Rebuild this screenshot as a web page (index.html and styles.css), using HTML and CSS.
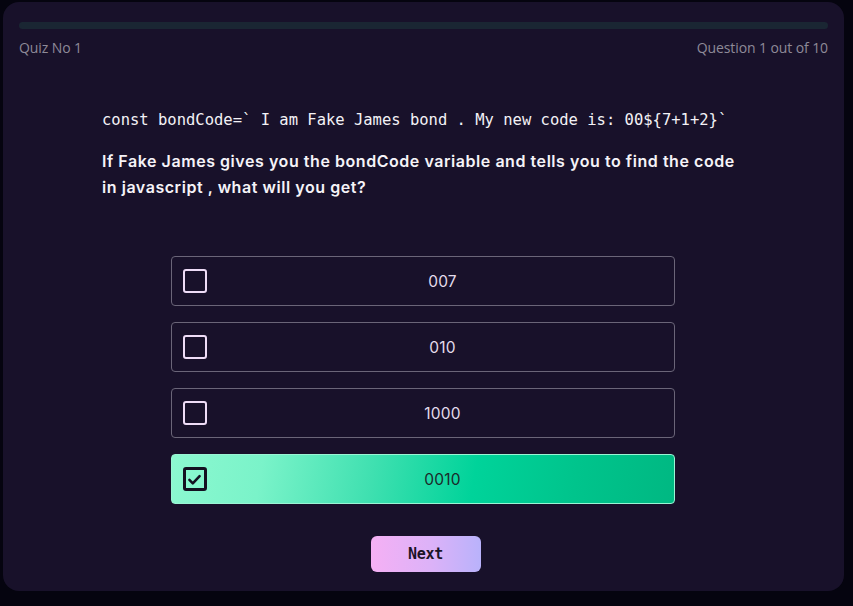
FILE: index.html
```html
<!DOCTYPE html>
<html>
<head>
<meta charset="utf-8">
<link rel="stylesheet" href="styles.css">
</head>
<body>
<div class="card">
  <div class="progress"><div class="progress-fill" style="width:0%"></div></div>
  <div class="meta">
    <span>Quiz No 1</span>
    <span>Question 1 out of 10</span>
  </div>
  <div class="question">
    <p class="code">const bondCode=` I am Fake James bond . My new code is: 00${7+1+2}`</p>
    <p class="prompt">If Fake James gives you the bondCode variable and tells you to find the code in javascript , what will you get?</p>
  </div>
  <div class="options">
    <div class="option"><span class="box"></span><span class="label">007</span></div>
    <div class="option"><span class="box"></span><span class="label">010</span></div>
    <div class="option"><span class="box"></span><span class="label">1000</span></div>
    <div class="option selected"><span class="box"><svg viewBox="0 0 20 20" width="17" height="17"><path d="M4 10.5l4 4 8-8.5" fill="none" stroke="#141021" stroke-width="3" stroke-linecap="round" stroke-linejoin="round"/></svg></span><span class="label">0010</span></div>
  </div>
  <div class="actions"><button class="next">Next</button></div>
</div>
</body>
</html>
```
FILE: styles.css
```css
* { box-sizing: border-box; }
html, body { margin: 0; padding: 0; }
body {
  background: #05040f;
  width: 853px;
  height: 606px;
  padding: 2px 9px 0 3px;
  font-family: "Inter", "Noto Sans", sans-serif;
}
.card {
  background: #18112a;
  border-radius: 16px;
  width: 841px;
  height: 589px;
  padding: 20px 16px 0 16px;
  display: flex;
  flex-direction: column;
}
.progress {
  height: 7px;
  border-radius: 4px;
  background: #1a2633;
  overflow: hidden;
}
.progress-fill { height: 100%; background: #00d49b; }
.meta {
  display: flex;
  justify-content: space-between;
  margin-top: 10px;
  font-family: "Open Sans", "Noto Sans", sans-serif;
  font-size: 14px;
  color: #8e8a98;
  letter-spacing: -0.1px;
  line-height: 18px;
}
.question {
  padding: 0 83px;
  margin-top: 53px;
}
.code {
  margin: 0;
  font-family: "DejaVu Sans Mono", monospace;
  font-size: 15.5px;
  color: #f3f1f6;
  line-height: 20px;
  white-space: nowrap;
}
.prompt {
  margin: 18px 0 0 0;
  font-family: "Inter", sans-serif;
  font-weight: 600;
  font-size: 16px;
  line-height: 26px;
  color: #f5f3f8;
  max-width: 650px;
  letter-spacing: 0.55px;
}
.options {
  margin: 56px auto 0;
  width: 504px;
  position: relative;
  left: -1px;
  display: flex;
  flex-direction: column;
  gap: 16px;
}
.option {
  height: 50px;
  border: 1px solid #6a6578;
  border-radius: 4px;
  display: flex;
  align-items: center;
  padding-left: 11px;
}
.box {
  width: 24px;
  height: 24px;
  border: 2px solid #eedcf7;
  border-radius: 3px;
  display: flex;
  align-items: center;
  justify-content: center;
  flex-shrink: 0;
}
.label {
  flex: 1;
  text-align: center;
  padding-left: 5px;
  font-family: "Inter", "Noto Sans", sans-serif;
  font-size: 15.5px;
  color: #e4dcec;
  letter-spacing: 0.2px;
}
.option.selected {
  border: 1px solid #9af5d4;
  background: linear-gradient(100deg, #8cf8d0 0%, #7af3c9 18%, #3fe0b0 40%, #00d39a 60%, #00c48c 80%, #00b882 100%);
}
.option.selected .box {
  border-color: #141021;
  border-width: 3px;
}
.option.selected .label { color: #1b2a2a; }
.actions {
  display: flex;
  justify-content: center;
  margin-top: 32px;
  padding-left: 4px;
}
.next {
  width: 110px;
  height: 36px;
  border: 0;
  border-radius: 6px;
  background: linear-gradient(90deg, #f5b0f4 0%, #dcb2f8 55%, #b9b2fb 100%);
  font-family: "DejaVu Sans Mono", monospace;
  font-weight: bold;
  font-size: 15px;
  color: #1b1426;
  letter-spacing: -0.3px;
  padding: 0;
}
```
